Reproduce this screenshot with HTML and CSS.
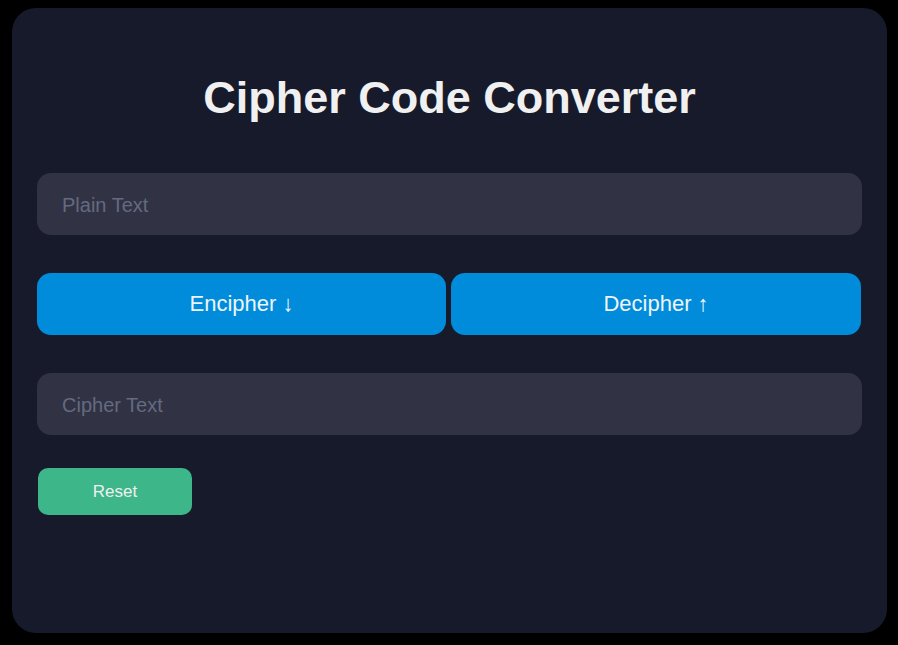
FILE: index.html
```html
<!DOCTYPE html>
<html lang="en">
<head>
<meta charset="utf-8">
<title>Cipher Code Converter</title>
<link rel="stylesheet" href="styles.css">
</head>
<body>
<main class="card">
  <h1 class="title">Cipher Code Converter</h1>
  <input class="field field-plain" type="text" placeholder="Plain Text">
  <div class="actions">
    <button class="btn btn-blue" type="button">Encipher ↓</button>
    <button class="btn btn-blue" type="button">Decipher ↑</button>
  </div>
  <input class="field field-cipher" type="text" placeholder="Cipher Text">
  <div class="reset-row">
    <button class="btn-reset" type="button">Reset</button>
  </div>
</main>
</body>
</html>
```
FILE: styles.css
```css
* { box-sizing: border-box; }
html, body { height: 100%; }
body {
  margin: 0;
  padding: 8px 11px 12px 12px;
  background: #000000;
  font-family: "Liberation Sans", Arial, sans-serif;
}
.card {
  width: 875px;
  height: 625px;
  background: #161a2b;
  border-radius: 24px;
  padding: 25px;
  display: flex;
  flex-direction: column;
}
.title {
  margin: 39px 0 0 0;
  text-align: center;
  color: #f0f0f0;
  font-size: 45px;
  font-weight: bold;
  line-height: 52px;
}
.field {
  display: block;
  width: 825px;
  height: 62px;
  border: none;
  outline: none;
  border-radius: 14px;
  background: #313244;
  color: #e0e0e0;
  font-family: "Liberation Sans", Arial, sans-serif;
  font-size: 20px;
  padding: 2px 25px 0 25px;
}
.field::placeholder { color: #646a80; }
.field-plain { margin-top: 49px; }
.field-cipher { margin-top: 38px; }
.actions {
  margin-top: 38px;
  display: grid;
  grid-template-columns: 409px 410px;
  gap: 5px;
}
.btn {
  height: 62px;
  border: none;
  border-radius: 14px;
  font-family: "Liberation Sans", Arial, sans-serif;
  font-size: 22px;
  color: #eef4fa;
  cursor: pointer;
}
.btn-blue { background: #008cdb; }
.reset-row {
  margin-top: 33px;
  padding-left: 1px;
  display: flex;
}
.btn-reset {
  width: 154px;
  height: 47px;
  border: none;
  border-radius: 10px;
  background: #3db68a;
  color: #f0f0f0;
  font-family: "Liberation Sans", Arial, sans-serif;
  font-size: 17px;
  cursor: pointer;
}
```
